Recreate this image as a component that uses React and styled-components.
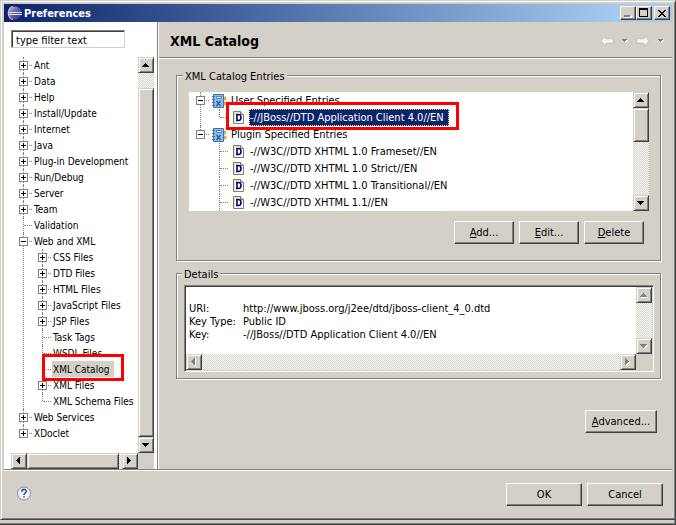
import React, { useState } from "react";
import styled, { createGlobalStyle, css } from "styled-components";

const GlobalStyle = createGlobalStyle`
  * {
    box-sizing: border-box;
  }
  body {
    margin: 0;
    background-color: #d4d0c8;
    color: #000;
  }
  body, button, input, textarea {
    font-family: "DejaVu Sans Condensed", "DejaVu Sans", Tahoma, sans-serif;
    font-size: 11px;
  }
  ul {
    margin: 0;
    padding: 0;
    list-style: none;
  }
`;

const raised = css`
  border: 1px solid;
  border-color: #d4d0c8 #404040 #404040 #d4d0c8;
  box-shadow: inset 1px 1px #fff, inset -1px -1px #808080;
  background-color: #d4d0c8;
`;

const Page = styled.div`
  display: flex;
  flex-direction: column;
  min-height: 100vh;
`;

const Window = styled.div`
  ${raised}
  flex: 1;
  display: flex;
  flex-direction: column;
  padding: 3px;
`;

const BackEdge = styled.div`
  height: 5px;
  border-right: 1px solid #404040;
  border-bottom: 1px solid #404040;
  box-shadow: inset -1px -1px #808080;
`;

const TitleBar = styled.header`
  display: flex;
  align-items: center;
  height: 18px;
  padding: 0 2px;
  background: linear-gradient(to right, #0a246a, #a6caf0 92%);
`;

const Caption = styled.h1`
  flex: 1;
  margin: 0 0 0 2px;
  padding-top: 1px;
  font-size: 11px;
  line-height: 18px;
  color: #fff;
`;

const CaptionButton = styled.button`
  ${raised}
  border-color: #fff #404040 #404040 #fff;
  box-shadow: inset -1px -1px #808080;
  width: 16px;
  height: 14px;
  padding: 0;
  margin-left: ${({ $gap }) => ($gap ? 2 : 0)}px;

  svg {
    display: block;
    margin: 0 auto;
  }
`;

const Main = styled.div`
  flex: 1;
  display: flex;
`;

const Sidebar = styled.nav`
  flex: none;
  width: 154px;
  display: flex;
  flex-direction: column;
  padding: 8px 3px 0 7px;
  background-color: #fff;
  border-right: 1px solid #808080;
`;

const Filter = styled.input`
  width: 114px;
  height: 18px;
  margin-bottom: 9px;
  padding: 2px 3px 0 4px;
  border: 1px solid;
  border-color: #808080 #d4d0c8 #d4d0c8 #808080;
  border-radius: 0;
  box-shadow: inset 1px 1px #404040;
  outline: none;
`;

const TreeView = styled.div`
  flex: 1;
  display: grid;
  grid-template-columns: 1fr 16px;
  grid-template-rows: 1fr 16px;
  min-height: 0;
  background-color: #d4d0c8;
`;

const TreePane = styled.div`
  min-width: 0;
  padding-left: 8px;
  overflow: hidden;
  background-color: #fff;
`;

const Item = styled.li`
  position: relative;

  /* dotted connector between siblings */
  &::before {
    content: "";
    position: absolute;
    top: 0;
    left: 4px;
    height: ${({ $last }) => ($last ? "8px" : "100%")};
    border-left: 1px dotted #808080;
  }
`;

const Row = styled.div`
  position: relative;
  display: flex;
  align-items: center;
  height: ${({ $tall }) => ($tall ? 17 : 16)}px;
  font-size: ${({ $tall }) => ($tall ? 11 : 10)}px;
  white-space: nowrap;

  > svg {
    flex: none;
  }
`;

const Guide = styled.span`
  flex: none;
  display: flex;
  align-items: center;
  width: 14px;
  padding-left: ${({ $leaf }) => ($leaf ? 4 : 0)}px;
  margin-right: ${({ $tall }) => ($tall ? 1 : 0)}px;

  &::after {
    content: "";
    flex: 1;
    margin: 0 1px;
    border-top: 1px dotted #808080;
  }
`;

const Toggle = styled.button`
  width: 9px;
  height: 9px;
  padding: 0;
  border: 1px solid #808080;
  background-color: #fff;

  svg {
    display: block;
  }
`;

const Label = styled.span`
  height: 100%;
  padding: 1px 5px 0 1px;
  line-height: 16px;
  background-color: ${({ $selected }) => ($selected ? "#d4d0c8" : "transparent")};
`;

const EntryLabel = styled(Label)`
  margin-left: 3px;
  ${({ $selected }) =>
    $selected &&
    css`
      background-color: #0a246a;
      color: #fff;
      outline: 1px dotted #f5db95;
      outline-offset: -1px;
    `}
`;

const Children = styled.ul`
  padding-left: 19px;
`;

const Highlight = styled.span`
  position: absolute;
  z-index: 1;
  top: -7px;
  bottom: -4px;
  left: ${({ $left }) => $left}px;
  width: ${({ $width }) => $width}px;
  border: 3px solid #f00;
  pointer-events: none;
`;

const Bar = styled.div`
  display: flex;
  justify-content: space-between;
  flex-direction: ${({ $horizontal }) => ($horizontal ? "row" : "column")};
  background: repeating-conic-gradient(#fff 0 25%, #d4d0c8 0 50%) 0 0 / 2px 2px;
`;

const BarButton = styled.button`
  ${raised}
  flex: none;
  width: 16px;
  height: 16px;
  padding: 0;

  svg {
    display: block;
    margin: 0 auto;
  }
`;

const Thumb = styled.div`
  ${raised}
  flex: ${({ $size }) => $size};
`;

const Gap = styled.div`
  flex: ${({ $size }) => $size};
`;

const Content = styled.main`
  flex: 1;
  min-width: 0;
  border-left: 1px solid #fff;
`;

const PageHeader = styled.div`
  display: flex;
  align-items: center;
  height: 36px;
  padding: 2px 8px 0 11px;
  border-bottom: 1px solid #808080;
  box-shadow: 0 1px #fff;
`;

const PageTitle = styled.h2`
  flex: 1;
  margin: 0;
  font-size: 14px;
`;

const NavButton = styled.button`
  display: flex;
  padding: 0;
  margin-left: 8px;
  border: 0;
  background: none;
`;

const Sections = styled.div`
  display: flex;
  flex-direction: column;
  gap: 5px;
  padding: 10px 11px 0 17px;
`;

const Group = styled.fieldset`
  min-width: 0;
  margin: 0;
  padding: ${({ $pad }) => $pad};
  border: 1px solid #808080;
  box-shadow: 1px 1px #fff, inset 1px 1px #fff;
`;

const Legend = styled.legend`
  padding: 2px 2px 0;
  line-height: 13px;
  background-color: #d4d0c8;
  margin-left: ${({ $offset }) => $offset}px;
`;

const Entries = styled.div`
  display: grid;
  grid-template-columns: 1fr 16px;
  background-color: #fff;
`;

const EntryPane = styled(TreePane)`
  padding-left: 7px;
`;

const ButtonRow = styled.div`
  display: flex;
  justify-content: flex-end;
  gap: 5px;
  padding: ${({ $pad }) => $pad};
`;

const Button = styled.button`
  width: ${({ $width }) => $width}px;
  height: 23px;
  padding: 0;
  border: 1px solid;
  border-color: #fff #404040 #404040 #fff;
  box-shadow: inset -1px -1px #808080;
  background-color: #d4d0c8;
  color: #000;
`;

const DetailsBox = styled.div`
  display: grid;
  grid-template-columns: 1fr 16px;
  grid-template-rows: 67px 16px;
  border: 1px solid;
  border-color: #808080 #fff #fff #808080;
  box-shadow: inset 1px 1px #404040, inset -1px -1px #d4d0c8;
  padding: 1px;
`;

const DetailsText = styled.textarea`
  display: block;
  width: 100%;
  height: 100%;
  padding: 2px 3px 0;
  border: 0;
  outline: none;
  resize: none;
  overflow: hidden;
  white-space: pre;
  line-height: 13px;
  tab-size: 54px;
  background-color: #fff;
  color: #000;
`;

const Footer = styled.footer`
  display: flex;
  align-items: center;
  height: 47px;
  padding: 2px 9px 0 12px;
  border-top: 1px solid #808080;
  box-shadow: inset 0 1px #fff;
`;

const FooterButtons = styled(ButtonRow)`
  flex: 1;
`;

const HelpButton = styled.button`
  display: flex;
  padding: 0;
  border: 0;
  background: none;
`;

const arrows = {
  up: "M3 0h1v1h1v1h1v1h1v1H0V3h1V2h1V1h1z",
  down: "M0 0h7v1H6v1H5v1H4v1H3V3H2V2H1V1H0z",
  left: "M3 0h1v7H3V6H2V5H1V4H0V3h1V2h1V1h1z",
  right: "M0 0h1v1h1v1h1v1h1v1H3v1H2v1H1v1H0z",
};

const Arrow = ({ dir, disabled }) => {
  const tall = dir === "left" || dir === "right";
  return (
    <svg
      width={tall ? 6 : 8}
      height={tall ? 8 : 5}
      shapeRendering="crispEdges"
      aria-hidden="true"
    >
      {disabled && <path d={arrows[dir]} fill="#fff" transform="translate(1 1)" />}
      <path d={arrows[dir]} fill={disabled ? "#808080" : "#000"} />
    </svg>
  );
};

const ScrollBar = ({ horizontal, before = 0, thumb = 0, after = 0, disabled }) => (
  <Bar $horizontal={horizontal}>
    <BarButton
      type="button"
      disabled={disabled}
      aria-label={horizontal ? "Scroll left" : "Scroll up"}
    >
      <Arrow dir={horizontal ? "left" : "up"} disabled={disabled} />
    </BarButton>
    {before > 0 && <Gap $size={before} />}
    {thumb > 0 && <Thumb $size={thumb} />}
    {after > 0 && <Gap $size={after} />}
    <BarButton
      type="button"
      disabled={disabled}
      aria-label={horizontal ? "Scroll right" : "Scroll down"}
    >
      <Arrow dir={horizontal ? "right" : "down"} disabled={disabled} />
    </BarButton>
  </Bar>
);

const EclipseLogo = () => (
  <svg width="16" height="16" viewBox="0 0 16 16" aria-hidden="true">
    <defs>
      <linearGradient id="globe" x1="0" y1="0" x2="1" y2="1">
        <stop offset="0" stopColor="#b9b5df" />
        <stop offset="0.5" stopColor="#665da5" />
        <stop offset="1" stopColor="#352d70" />
      </linearGradient>
    </defs>
    <path d="M7 1C0 2 0 14 7 15z" fill="#e3b3b8" />
    <circle cx="9" cy="8" r="6.5" fill="url(#globe)" />
    <path d="M2 7.500h14M2 9.500h14" stroke="#dcdcf6" strokeWidth="1" />
  </svg>
);

const BookIcon = () => (
  <svg width="16" height="16" viewBox="0 0 16 16" aria-hidden="true">
    <path d="M13 4h2v3h-2zM13 9h2v3h-2z" fill="#e8c066" stroke="#b58a38" strokeWidth="0.5" />
    <path d="M2.500 1.500h10v13h-10z" fill="#8fbde8" stroke="#3f73b0" />
    <path d="M1 3.500h3M1 6.500h3M1 9.500h3M1 12.500h3" stroke="#3f73b0" />
    <path d="M5.500 3.500h5v2h-5z" fill="#e8f2fc" stroke="#5585b8" />
    <path d="M5.500 8l4 5M9.500 8l-4 5" stroke="#235a9a" strokeWidth="1.300" />
  </svg>
);

const DocIcon = () => (
  <svg width="16" height="16" viewBox="0 0 16 16" aria-hidden="true">
    <path d="M3.500 1.500h7l3 3v9h-10z" fill="#fff" stroke="#7b7b70" />
    <path d="M10.500 1.500v3h3" fill="#e5d9a2" stroke="#7b7b70" />
    <path d="M4.500 13V2.500H10" fill="none" stroke="#eee0b0" />
    <path
      d="M6 4.500h2.500c2 0 2.500 1.200 2.500 3s-.5 3-2.500 3H6M7 4.500v6"
      fill="none"
      stroke="#000080"
      strokeWidth="1.600"
    />
  </svg>
);

const HelpIcon = () => (
  <svg width="16" height="16" viewBox="0 0 16 16" aria-hidden="true">
    <circle cx="8" cy="7.500" r="6.500" fill="#f5f9ff" stroke="#7b8daa" />
    <path
      d="M5.800 5.700c0-3 4.500-3 4.500-.3 0 1.500-2.300 1.700-2.300 3.500M8 10.300v1.500"
      fill="none"
      stroke="#31578c"
      strokeWidth="1.600"
    />
  </svg>
);

const NavArrow = ({ flip }) => (
  <svg width="14" height="12" viewBox="0 0 14 12" aria-hidden="true">
    <path
      d="M.7 6L6 .8v3h7.200v4.400H6v3z"
      transform={flip ? "translate(14 0) scale(-1 1)" : undefined}
      fill="#f5f4ef"
      stroke="#bdb9b1"
      strokeWidth="0.800"
    />
  </svg>
);

const MenuArrow = () => (
  <svg width="6" height="4" shapeRendering="crispEdges" aria-hidden="true">
    <path d="M1 1h5v1H5v1H4v1H3V3z" fill="#fff" />
    <path d="M0 0h5v1H4v1H3v1H2V2H1V1H0z" fill="#808080" />
  </svg>
);

const pages = [
  { name: "Ant", items: [] },
  { name: "Data", items: [] },
  { name: "Help", items: [] },
  { name: "Install/Update", items: [] },
  { name: "Internet", items: [] },
  { name: "Java", items: [] },
  { name: "Plug-in Development", items: [] },
  { name: "Run/Debug", items: [] },
  { name: "Server", items: [] },
  { name: "Team", items: [] },
  { name: "Validation" },
  {
    name: "Web and XML",
    items: [
      { name: "CSS Files", items: [] },
      { name: "DTD Files", items: [] },
      { name: "HTML Files", items: [] },
      { name: "JavaScript Files", items: [] },
      { name: "JSP Files", items: [] },
      { name: "Task Tags" },
      { name: "WSDL Files" },
      { name: "XML Catalog", selected: true },
      { name: "XML Files", items: [] },
      { name: "XML Schema Files" },
    ],
  },
  { name: "Web Services", items: [] },
  { name: "XDoclet", items: [] },
];

const catalog = [
  {
    name: "User Specified Entries",
    items: [{ name: "-//JBoss//DTD Application Client 4.0//EN", selected: true }],
  },
  {
    name: "Plugin Specified Entries",
    more: true,
    items: [
      { name: "-//W3C//DTD XHTML 1.0 Frameset//EN" },
      { name: "-//W3C//DTD XHTML 1.0 Strict//EN" },
      { name: "-//W3C//DTD XHTML 1.0 Transitional//EN" },
      { name: "-//W3C//DTD XHTML 1.1//EN" },
    ],
  },
];

const details = [
  "",
  "URI:\thttp://www.jboss.org/j2ee/dtd/jboss-client_4_0.dtd",
  "Key Type:\tPublic ID",
  "Key:\t-//JBoss//DTD Application Client 4.0//EN",
].join("\n");

const TreeItem = ({ node, last, entry, more }) => {
  const [open, setOpen] = useState(Boolean(node.items && node.items.length));
  const Text = entry ? EntryLabel : Label;

  return (
    <Item $last={last && !more}>
      <Row $tall={entry}>
        <Guide $leaf={!node.items} $tall={entry}>
          {node.items && (
            <Toggle
              type="button"
              aria-label={`${open ? "Collapse" : "Expand"} ${node.name}`}
              onClick={() => setOpen(!open)}
            >
              <svg width="7" height="7" shapeRendering="crispEdges">
                <path d={open ? "M1 3h5v1H1z" : "M1 3h2V1h1v2h2v1H4v2H3V4H1z"} />
              </svg>
            </Toggle>
          )}
        </Guide>
        {entry && (node.items ? <BookIcon /> : <DocIcon />)}
        <Text $selected={node.selected}>{node.name}</Text>
        {node.selected && (
          <Highlight $left={entry ? 11 : 4} $width={entry ? 233 : 82} />
        )}
      </Row>
      {open && node.items.length > 0 && (
        <Children>
          {node.items.map((child, i) => (
            <TreeItem
              key={child.name}
              node={child}
              entry={entry}
              more={node.more}
              last={i === node.items.length - 1}
            />
          ))}
        </Children>
      )}
    </Item>
  );
};

const Tree = ({ nodes, entry }) => (
  <ul>
    {nodes.map((node, i) => (
      <TreeItem
        key={node.name}
        node={node}
        entry={entry}
        last={i === nodes.length - 1}
      />
    ))}
  </ul>
);

const App = () => {
  const [filter, setFilter] = useState("type filter text");

  return (
    <Page>
      <GlobalStyle />
      <Window>
        <TitleBar>
          <EclipseLogo />
          <Caption>Preferences</Caption>
          <CaptionButton type="button" aria-label="Minimize">
            <svg width="10" height="10" shapeRendering="crispEdges">
              <path d="M2 8h7v2H2z" fill="#fff" />
              <path d="M1 7h6v2H1z" fill="#808080" />
            </svg>
          </CaptionButton>
          <CaptionButton type="button" aria-label="Maximize">
            <svg width="10" height="10" shapeRendering="crispEdges">
              <path d="M0 0h9v9H0zM1 2v6h7V2z" fillRule="evenodd" />
            </svg>
          </CaptionButton>
          <CaptionButton type="button" aria-label="Close" $gap>
            <svg width="10" height="9" shapeRendering="crispEdges">
              <path d="M1 1h2v1h1v1h2V2h1V1h2v1H8v1H7v1H6v1h1v1h1v1h1v1H7V7H6V6H4v1H3v1H1V7h1V6h1V5h1V4H3V3H2V2H1z" />
            </svg>
          </CaptionButton>
        </TitleBar>

        <Main>
          <Sidebar>
            <Filter
              type="text"
              aria-label="Filter"
              value={filter}
              onChange={(e) => setFilter(e.target.value)}
            />
            <TreeView>
              <TreePane>
                <Tree nodes={pages} />
              </TreePane>
              <ScrollBar before={15} thumb={349} />
              <ScrollBar horizontal thumb={92} after={3} />
            </TreeView>
          </Sidebar>

          <Content>
            <PageHeader>
              <PageTitle>XML Catalog</PageTitle>
              <NavButton type="button" aria-label="Back">
                <NavArrow />
              </NavButton>
              <NavButton type="button" aria-label="Back history">
                <MenuArrow />
              </NavButton>
              <NavButton type="button" aria-label="Forward">
                <NavArrow flip />
              </NavButton>
              <NavButton type="button" aria-label="Forward history">
                <MenuArrow />
              </NavButton>
            </PageHeader>

            <Sections>
              <Group $pad="9px 11px 16px 12px">
                <Legend $offset={-6}>XML Catalog Entries</Legend>
                <Entries>
                  <EntryPane>
                    <Tree nodes={catalog} entry />
                  </EntryPane>
                  <ScrollBar thumb={33} after={54} />
                </Entries>
                <ButtonRow $pad="10px 5px 0 0">
                  <Button type="button" $width={60}>
                    <u>A</u>dd...
                  </Button>
                  <Button type="button" $width={60}>
                    <u>E</u>dit...
                  </Button>
                  <Button type="button" $width={60}>
                    <u>D</u>elete
                  </Button>
                </ButtonRow>
              </Group>

              <Group $pad="4px 6px 6px 7px">
                <Legend $offset={-2}>Details</Legend>
                <DetailsBox>
                  <DetailsText readOnly aria-label="Details" value={details} />
                  <ScrollBar disabled />
                  <ScrollBar horizontal disabled />
                </DetailsBox>
              </Group>

              <ButtonRow $pad="26px 4px 0 0">
                <Button type="button" $width={72}>
                  <u>A</u>dvanced...
                </Button>
              </ButtonRow>
            </Sections>
          </Content>
        </Main>

        <Footer>
          <HelpButton type="button" aria-label="Help">
            <HelpIcon />
          </HelpButton>
          <FooterButtons>
            <Button type="button" $width={76}>
              OK
            </Button>
            <Button type="button" $width={76}>
              Cancel
            </Button>
          </FooterButtons>
        </Footer>
      </Window>
      <BackEdge />
    </Page>
  );
};

export default App;
